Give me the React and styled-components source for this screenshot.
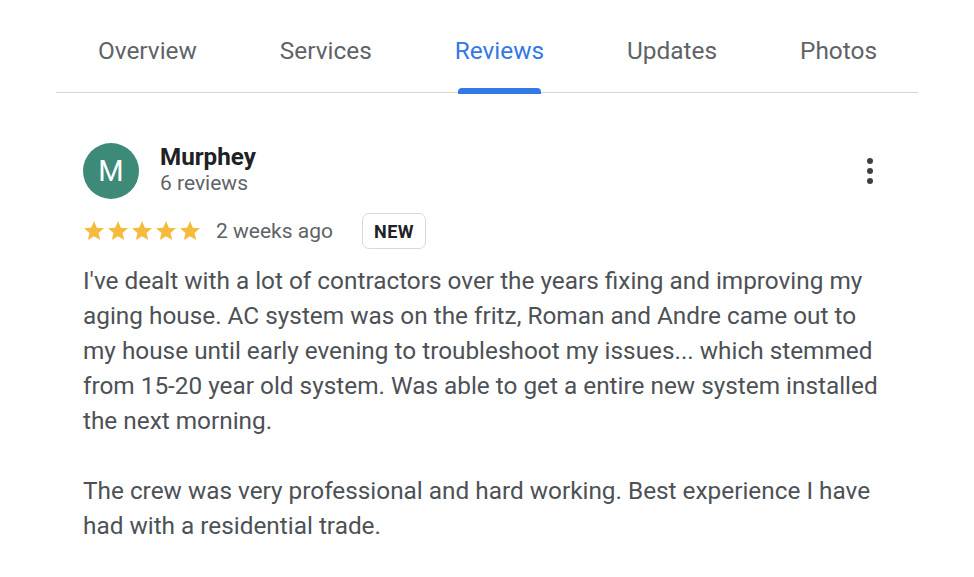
import React from 'react';
import styled, { createGlobalStyle } from 'styled-components';

const GlobalStyle = createGlobalStyle`
    body {
        margin: 0;
        background: #ffffff;
        font-family: Roboto, "Liberation Sans", Arial, sans-serif;
    }
`;

const Page = styled.div`
    width: 862px;
    padding-left: 56px;
`;

const TabBar = styled.div`
    display: flex;
    padding: 0 41px 0 42px;
    justify-content: space-between;
    border-bottom: 1.5px solid #d4d6d9;
`;

const Tab = styled.div`
    position: relative;
    height: 92px;
    padding-top: 8px;
    box-sizing: border-box;
    display: flex;
    align-items: center;
    font-size: 24.4px;
    color: ${p => (p.active ? '#3478e5' : '#5f6368')};

    &::after {
        content: '';
        display: ${p => (p.active ? 'block' : 'none')};
        position: absolute;
        left: 3px;
        right: 3px;
        bottom: -1.5px;
        height: 6px;
        border-radius: 4px 4px 0 0;
        background: #3478e5;
    }
`;

const Review = styled.div`
    padding: 50px 0 0 27px;
`;

const Header = styled.div`
    display: flex;
    align-items: center;
`;

const Avatar = styled.div`
    width: 56px;
    height: 56px;
    border-radius: 50%;
    background: #3e8a78;
    color: #ffffff;
    font-size: 29px;
    display: flex;
    align-items: center;
    justify-content: center;
`;

const Author = styled.div`
    margin-left: 21px;
    flex: 1;
    margin-top: -2px;
`;

const Name = styled.div`
    font-size: 24.2px;
    font-weight: 700;
    color: #202124;
    line-height: 27px;
`;

const Count = styled.div`
    font-size: 21px;
    color: #5f6368;
    line-height: 25px;
`;

const Menu = styled.div`
    width: 24px;
    margin-right: 36px;
    display: flex;
    flex-direction: column;
    align-items: center;
    gap: 4px;
`;

const Dot = styled.span`
    width: 6px;
    height: 6px;
    border-radius: 50%;
    background: #3c4043;
`;

const Meta = styled.div`
    display: flex;
    align-items: center;
    margin-top: 14px;
    height: 36px;
`;

const Stars = styled.div`
    display: flex;
    margin-left: -1px;
`;

const When = styled.span`
    margin-left: 14px;
    font-size: 21px;
    color: #5f6368;
`;

const Badge = styled.span`
    margin-left: 29px;
    height: 36px;
    box-sizing: border-box;
    padding: 0 11px;
    border: 1.5px solid #d7d9dc;
    border-radius: 7px;
    display: flex;
    align-items: center;
    font-size: 18px;
    font-weight: 700;
    letter-spacing: 0.5px;
    color: #202124;
`;

const Body = styled.div`
    margin-top: 14px;
    width: 802px;
    font-size: 24.35px;
    line-height: 35px;
    color: #4d5156;

    p {
        margin: 0 0 35px;
    }
`;

const Star = () => (
    <svg width="24" height="24" viewBox="0 0 24 24">
        <path fill="#f5bb3c" d="M12 17.27L18.18 21l-1.64-7.03L22 9.24l-7.19-.61L12 2 9.19 8.63 2 9.24l5.46 4.73L5.82 21z" />
    </svg>
);

const tabs = ['Overview', 'Services', 'Reviews', 'Updates', 'Photos'];

export default function App() {
    return (
        <Page>
            <GlobalStyle />
            <TabBar>
                {tabs.map(t => (
                    <Tab key={t} active={t === 'Reviews'}>{t}</Tab>
                ))}
            </TabBar>
            <Review>
                <Header>
                    <Avatar>M</Avatar>
                    <Author>
                        <Name>Murphey</Name>
                        <Count>6 reviews</Count>
                    </Author>
                    <Menu>
                        <Dot />
                        <Dot />
                        <Dot />
                    </Menu>
                </Header>
                <Meta>
                    <Stars>
                        <Star /><Star /><Star /><Star /><Star />
                    </Stars>
                    <When>2 weeks ago</When>
                    <Badge>NEW</Badge>
                </Meta>
                <Body>
                    <p>
                        I've dealt with a lot of contractors over the years fixing and improving my aging house. AC system was on the fritz, Roman and Andre came out to my house until early evening to troubleshoot my issues... which stemmed from 15-20 year old system. Was able to get a entire new system installed the next morning.
                    </p>
                    <p>
                        The crew was very professional and hard working. Best experience I have had with a residential trade.
                    </p>
                </Body>
            </Review>
        </Page>
    );
}
